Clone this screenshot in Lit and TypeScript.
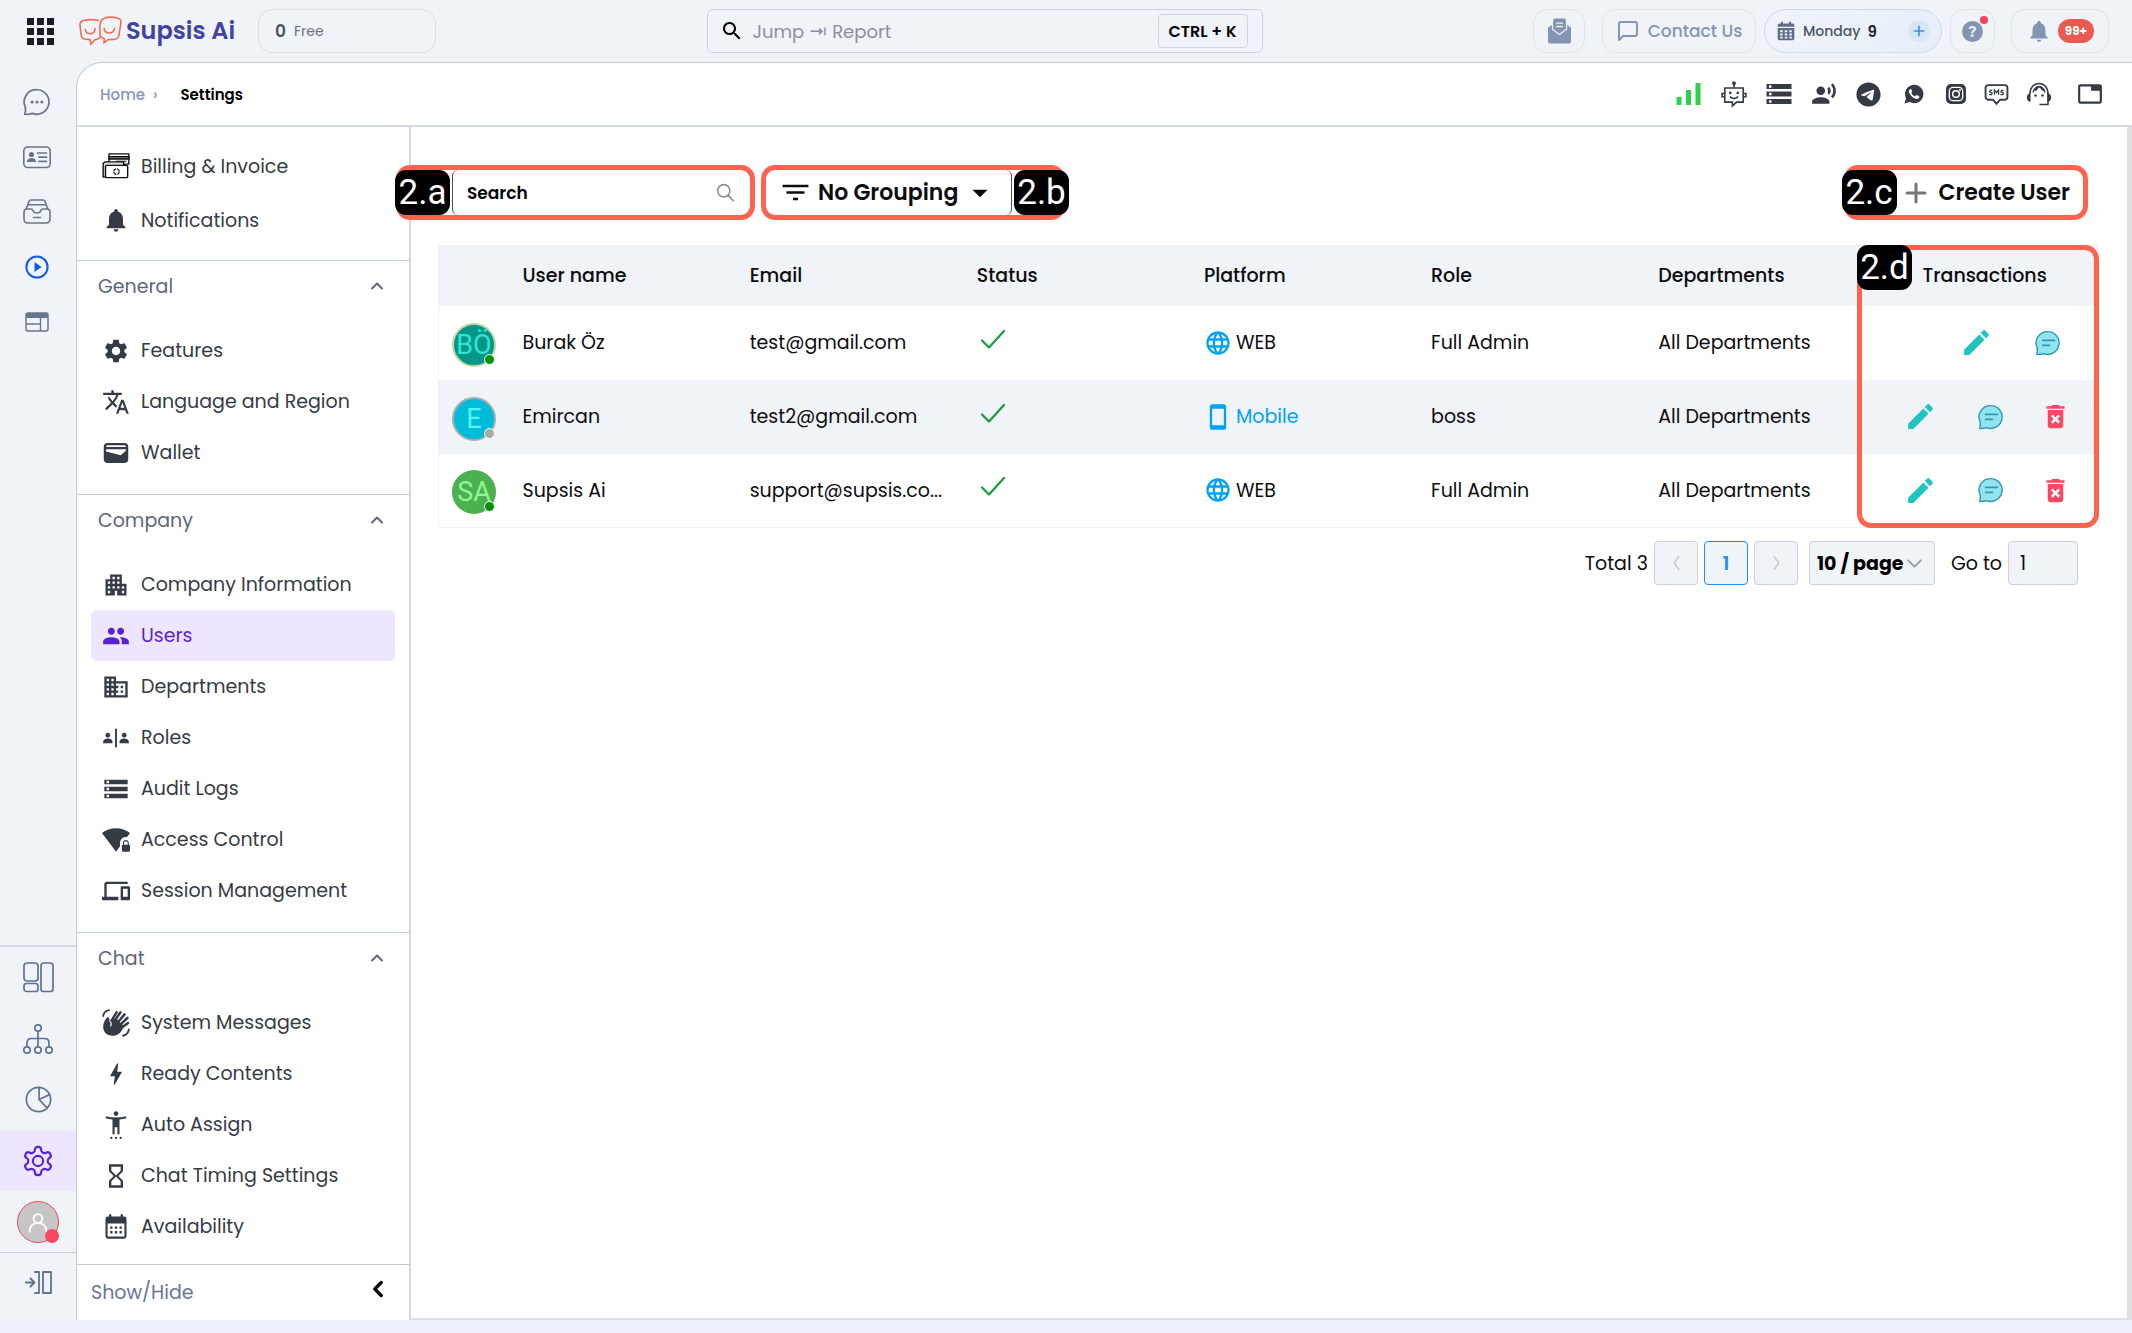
import { LitElement, html, css, svg, nothing } from "lit";
import { customElement } from "lit/decorators.js";
import { classMap } from "lit/directives/class-map.js";

type Glyph = ReturnType<typeof svg>;

const icon = (body: Glyph, w = 24, h = w, box = "0 0 24 24") => html`
  <svg class="icon" width=${w} height=${h} viewBox=${box} aria-hidden="true">${body}</svg>`;

const solid = (d: string) => svg`<path d=${d} fill="currentColor" fill-rule="evenodd"/>`;
const line = (d: string, w = 1.5) => svg`<path d=${d} fill="none" stroke="currentColor" stroke-width=${w} stroke-linecap="round" stroke-linejoin="round"/>`;

/* ---------- glyphs ---------- */
const g = {
  bell: solid("M12 22c1.1 0 2-.9 2-2h-4c0 1.1.89 2 2 2zm6-6v-5c0-3.07-1.64-5.64-4.5-6.32V4c0-.83-.67-1.5-1.5-1.5s-1.5.67-1.5 1.5v.68C7.63 5.36 6 7.92 6 11v5l-2 2v1h16v-1l-2-2z"),
  cog: solid("M19.14 12.94c.04-.3.06-.61.06-.94 0-.32-.02-.64-.07-.94l2.03-1.58c.18-.14.23-.41.12-.61l-1.92-3.32c-.12-.22-.37-.29-.59-.22l-2.39.96c-.5-.38-1.03-.7-1.62-.94l-.36-2.54c-.04-.24-.24-.41-.48-.41h-3.84c-.24 0-.43.17-.47.41l-.36 2.54c-.59.24-1.13.57-1.62.94l-2.39-.96c-.22-.08-.47 0-.59.22L2.74 8.87c-.12.21-.08.47.12.61l2.03 1.58c-.05.3-.09.63-.09.94s.02.64.07.94l-2.03 1.58c-.18.14-.23.41-.12.61l1.92 3.32c.12.22.37.29.59.22l2.39-.96c.5.38 1.03.7 1.62.94l.36 2.54c.05.24.24.41.48.41h3.84c.24 0 .44-.17.47-.41l.36-2.54c.59-.24 1.13-.56 1.62-.94l2.39.96c.22.08.47 0 .59-.22l1.92-3.32c.12-.22.07-.47-.12-.61l-2.01-1.58zM12 15.6c-1.98 0-3.6-1.62-3.6-3.6s1.62-3.6 3.6-3.6 3.6 1.62 3.6 3.6-1.62 3.6-3.6 3.6z"),
  translate: solid("M12.87 15.07l-2.54-2.51.03-.03c1.74-1.94 2.98-4.17 3.71-6.53H17V4h-7V2H8v2H1v1.99h11.17C11.5 7.92 10.44 9.75 9 11.35 8.07 10.32 7.3 9.19 6.69 8h-2c.73 1.63 1.73 3.17 2.98 4.56l-5.09 5.02L4 19l5-5 3.11 3.11.76-2.04zM18.5 10h-2L12 22h2l1.12-3h4.75L21 22h2l-4.5-12zm-2.62 7l1.62-4.33L19.12 17h-3.24z"),
  people: solid("M16 11c1.66 0 2.99-1.34 2.99-3S17.66 5 16 5c-1.66 0-3 1.34-3 3s1.34 3 3 3zm-8 0c1.66 0 2.99-1.34 2.99-3S9.66 5 8 5C6.34 5 5 6.34 5 8s1.34 3 3 3zm0 2c-2.33 0-7 1.17-7 3.5V19h14v-2.5c0-2.33-4.67-3.5-7-3.5zm8 0c-.29 0-.62.02-.97.05 1.16.84 1.97 1.97 1.97 3.45V19h6v-2.5c0-2.33-4.67-3.5-7-3.5z"),
  storage: solid("M2 20h20v-4H2v4zm2-3h2v2H4v-2zM2 4v4h20V4H2zm4 3H4V5h2v2zm-4 7h20v-4H2v4zm2-3h2v2H4v-2z"),
  bolt: solid("M11 21h-1l1-7H7.5c-.58 0-.57-.32-.38-.66.19-.34.05-.08.07-.12C8.48 10.94 10.42 7.54 13 3h1l-1 7h3.5c.49 0 .56.33.47.51l-.07.15C12.96 17.55 11 21 11 21z"),
  domain: solid("M12 7V3H2v18h20V7H12zM6 19H4v-2h2v2zm0-4H4v-2h2v2zm0-4H4V9h2v2zm0-4H4V5h2v2zm4 12H8v-2h2v2zm0-4H8v-2h2v2zm0-4H8V9h2v2zm0-4H8V5h2v2zm10 12h-8v-2h2v-2h-2v-2h2v-2h-2V9h8v10zm-2-8h-2v2h2v-2zm0 4h-2v2h2v-2z"),
  apartment: solid("M17 11V3H7v4H3v14h8v-4h2v4h8V11h-4zM7 19H5v-2h2v2zm0-4H5v-2h2v2zm0-4H5V9h2v2zm4 4H9v-2h2v2zm0-4H9V9h2v2zm0-4H9V5h2v2zm4 8h-2v-2h2v2zm0-4h-2V9h2v2zm0-4h-2V5h2v2zm4 12h-2v-2h2v2zm0-4h-2v-2h2v2z"),
  wifiLock: solid("M20.5 9.5c.28 0 .55.04.81.08L24 6c-3.34-2.51-7.5-4-12-4S3.34 3.49 0 6l12 16 3.5-4.67V14.5c0-2.76 2.24-5 5-5zM23 16v-1.5c0-1.38-1.12-2.5-2.5-2.5S18 13.12 18 14.5V16c-.55 0-1 .45-1 1v4c0 .55.45 1 1 1h5c.55 0 1-.45 1-1v-4c0-.55-.45-1-1-1zm-1 0h-3v-1.5c0-.83.67-1.5 1.5-1.5s1.5.67 1.5 1.5V16z"),
  devices: solid("M4 6h18V4H4c-1.1 0-2 .9-2 2v11H0v3h14v-3H4V6zm19 2h-6c-.55 0-1 .45-1 1v10c0 .55.45 1 1 1h6c.55 0 1-.45 1-1V9c0-.55-.45-1-1-1zm-1 9h-4v-7h4v7z"),
  hourglass: solid("M6 2v6h.01L6 8.01 10 12l-4 4 .01.01H6V22h12v-5.99h-.01L18 16l-4-4 4-3.99-.01-.01H18V2H6zm10 14.5V20H8v-3.5l4-4 4 4zm-4-5l-4-4V4h8v3.5l-4 4z"),
  search: solid("M15.5 14h-.79l-.28-.27C15.41 12.59 16 11.11 16 9.5 16 5.91 13.09 3 9.5 3S3 5.91 3 9.5 5.91 16 9.5 16c1.61 0 3.09-.59 4.23-1.57l.27.28v.79l5 4.99L20.49 19l-4.99-5zm-6 0C7.01 14 5 11.99 5 9.5S7.01 5 9.5 5 14 7.01 14 9.5 11.99 14 9.5 14z"),
  pencil: solid("M3 17.25V21h3.75L17.81 9.94l-3.75-3.75L3 17.25zM20.71 7.04c.39-.39.39-1.02 0-1.41l-2.34-2.34c-.39-.39-1.02-.39-1.41 0l-1.83 1.83 3.75 3.75 1.83-1.83z"),
  globe: solid("M11.99 2C6.47 2 2 6.48 2 12s4.47 10 9.99 10C17.52 22 22 17.52 22 12S17.52 2 11.99 2zm6.93 6h-2.95c-.32-1.25-.78-2.45-1.38-3.56 1.84.63 3.37 1.91 4.33 3.56zM12 4.04c.83 1.2 1.48 2.53 1.91 3.96h-3.82c.43-1.43 1.08-2.76 1.91-3.96zM4.26 14C4.1 13.36 4 12.69 4 12s.1-1.36.26-2h3.38c-.08.66-.14 1.32-.14 2 0 .68.06 1.34.14 2H4.26zm.82 2h2.95c.32 1.25.78 2.45 1.38 3.56-1.84-.63-3.37-1.9-4.33-3.56zm2.95-8H5.08c.96-1.66 2.49-2.93 4.33-3.56C8.81 5.55 8.35 6.75 8.03 8zM12 19.96c-.83-1.2-1.48-2.53-1.91-3.96h3.82c-.43 1.43-1.08 2.76-1.91 3.96zM14.34 14H9.66c-.09-.66-.16-1.32-.16-2 0-.68.07-1.35.16-2h4.68c.09.65.16 1.32.16 2 0 .68-.07 1.34-.16 2zm.25 5.56c.6-1.11 1.06-2.31 1.38-3.56h2.95c-.96 1.65-2.49 2.93-4.33 3.56zM16.36 14c.08-.66.14-1.32.14-2 0-.68-.06-1.34-.14-2h3.38c.16.64.26 1.31.26 2s-.1 1.36-.26 2h-3.38z"),
  phone: solid("M17 1.01L7 1c-1.1 0-1.99.9-1.99 2v18c0 1.1.89 2 1.99 2h10c1.1 0 2-.9 2-2V3c0-1.1-.9-1.99-2-1.99zM17 19H7V5h10v14z"),
  trash: solid("M6 19c0 1.1.9 2 2 2h8c1.1 0 2-.9 2-2V7H6v12zm2.46-7.12l1.41-1.41L12 12.59l2.12-2.12 1.41 1.41L13.41 14l2.12 2.12-1.41 1.41L12 15.41l-2.12 2.12-1.41-1.41L10.59 14l-2.13-2.12zM15.5 4l-1-1h-5l-1 1H5v2h14V4z"),
  telegram: solid("M12 2C6.48 2 2 6.48 2 12s4.48 10 10 10 10-4.48 10-10S17.52 2 12 2zm4.64 6.8c-.15 1.58-.8 5.42-1.13 7.19-.14.75-.42 1-.68 1.03-.58.05-1.02-.38-1.58-.75-.88-.58-1.38-.94-2.23-1.5-.99-.65-.35-1.01.22-1.59.15-.15 2.71-2.48 2.76-2.69a.2.2 0 00-.05-.18c-.06-.05-.14-.03-.21-.02-.09.02-1.49.95-4.22 2.79-.4.27-.76.41-1.08.4-.36-.01-1.04-.2-1.55-.37-.63-.2-1.12-.31-1.08-.66.02-.18.27-.36.74-.55 2.92-1.27 4.86-2.11 5.83-2.51 2.78-1.16 3.35-1.36 3.73-1.36.08 0 .27.02.39.12.1.08.13.19.14.27-.01.06.01.24 0 .38z"),
  voice: solid("M9 5a4 4 0 1 0 0 8a4 4 0 1 0 0-8zM9 15c-2.67 0-8 1.34-8 4v2h16v-2c0-2.66-5.33-4-8-4zm7.76-9.64l-1.68 1.69c.84 1.18.84 2.71 0 3.89l1.68 1.69c2.02-2.02 2.02-5.07 0-7.27zM20.07 2l-1.63 1.63c2.77 3.02 2.77 7.56 0 10.74L20.07 16c3.9-3.89 3.91-9.95 0-14z"),
  tab: solid("M21 3H3c-1.1 0-2 .9-2 2v14c0 1.1.9 2 2 2h18c1.1 0 2-.9 2-2V5c0-1.1-.9-2-2-2zm0 16H3V5h10v4h8v10z"),
  filter: solid("M10 18h4v-2h-4v2zM2 6v2h20V6H2zm3 7h14v-2H5v2z"),
  money: svg`<g fill="#fff" stroke="#111" stroke-width="1.2" stroke-linejoin="round"><path d="M6 1.6h17v8.8h-17z"/><path d="M6 4h17v2H6z" fill="#888"/><path d="M12 8h9" stroke="#555"/><path d="M1 9.5l2-1h15.5v11l-17.5 2z" fill="#ddd"/><rect x="3" y="11.5" width="19" height="10.5" rx="1"/></g><circle cx="12.4" cy="16.8" r="2.4" fill="none" stroke="#111" stroke-width="1" stroke-dasharray="3 .8"/>`,
  wallet: svg`<rect x="1.5" y="3.5" width="21" height="17" rx="3.4" fill="currentColor"/><path d="M3.5 6.900c0-.9.6-1.500 1.500-1.500h14c.9 0 1.500.6 1.500 1.500z" fill="#fff"/><path d="M3.500 8.800h17v1.200L16 14l-12.500-3.200z" fill="#fff"/>`,
  roles: svg`<g fill="currentColor"><rect x="11.2" y="4" width="1.6" height="16"/><circle cx="5" cy="9.6" r="2"/><path d="M1 15.2c0-2 2.4-2.8 4-2.8s4 .8 4 2.8v1.2H1z"/><circle cx="19" cy="9.6" r="2"/><path d="M15 15.2c0-2 2.400-2.800 4-2.800s4 .8 4 2.800v1.200h-8z"/></g>`,
  hand: svg`<g fill="none" stroke="currentColor" stroke-linecap="round"><path d="M7 12 12.500 2.800M9 13 15.800 2.800M11 14.500 19.300 4.600M12.500 16.500 21.800 7.600M13.500 18.500 22.300 12" stroke-width="2.100"/><path d="M1 6C1.500 3.400 3.400 1.400 6 1M23 17.500c-.3 2.800-2 4.800-5 5.400" stroke-width="1.600"/></g><path d="M4.200 7.200c1.300-.4 2.300.8 2.300 2.600L12 8l6.500 6.500c-1 5-5 8.500-9.500 8.500-5 0-8-3.500-8-7.500 0-3.500 1.400-6 3.200-8.300z" fill="currentColor"/><path d="M6.300 10c1.900 1.500 1.800 3.500 1 5" stroke="#fff" stroke-width="1" fill="none"/>`,
  access: svg`<g fill="currentColor"><circle cx="12" cy="2.200" r="2"/><path d="M20.500 4.500C18 5.200 15 5.500 12 5.500s-6-.3-8.500-1l-.5 1.800c1.900.5 4 .8 6 1V20h1.800v-6h2.400v6H15V7.300c2-.2 4.100-.5 6-1z"/><circle cx="8" cy="23" r="1"/><circle cx="12" cy="23" r="1"/><circle cx="16" cy="23" r="1"/></g>`,
  calendar: svg`<path d="M6 1h2v2h8V1h2v2h1a2 2 0 0 1 2 2v15a2 2 0 0 1-2 2H5a2 2 0 0 1-2-2V5a2 2 0 0 1 2-2h1zM4.800 9v11.200h14.400V9z" fill="currentColor" fill-rule="evenodd"/><g fill="currentColor"><path d="M7 11.500h2v2H7zM11 11.500h2v2h-2zM15 11.500h2v2h-2zM7 15.500h2v2H7zM11 15.500h2v2h-2zM15 15.500h2v2h-2z"/></g>`,
  calendarSolid: svg`<path d="M6 1h2.500v2h7V1H18v2h2a2 2 0 0 1 2 2v2H2V5a2 2 0 0 1 2-2h2zM2 8.500h20V21a2 2 0 0 1-2 2H4a2 2 0 0 1-2-2z" fill="currentColor"/><path d="M5 11h3v2.500H5zM10.500 11h3v2.500h-3zM16 11h3v2.500h-3zM5 15h3v2.500H5zM10.500 15h3v2.500h-3zM16 15h3v2.500h-3zM5 19h3v2H5zM10.500 19h3v2h-3zM16 19h3v2h-3z" fill="#f0f3f7"/>`,
  grid: svg`<path d="M0 0h7v7H0zM10 0h7v7h-7zM20 0h7v7h-7zM0 10h7v7H0zM10 10h7v7h-7zM20 10h7v7h-7zM0 20h7v7H0zM10 20h7v7h-7zM20 20h7v7h-7z" fill="#1d1b24"/>`,
  mail: svg`<path d="M0 9.500 4 6.500v5L12 17.500 20 11.500v-5l4 3V24a2 2 0 0 1-2 2H2a2 2 0 0 1-2-2z" fill="currentColor"/><path d="M5.300 2a2 2 0 0 1 2-2h9.400a2 2 0 0 1 2 2v9L12 15.800l-6.700-4.800zM8.500 4v1.500h7V4zm0 3.600v1.500h7V7.600z" fill="currentColor" fill-rule="evenodd"/>`,
  message: line("M21 15a2 2 0 0 1-2 2H7l-4 4V5a2 2 0 0 1 2-2h14a2 2 0 0 1 2 2z", 2),
  bubble: svg`<path d="M12 1.500A10.500 10.500 0 1 1 8 21.800Q5 22.800 1.500 22.500 2.600 19.500 2 16.500A10.500 10.500 0 0 1 12 1.500z" fill="none" stroke="currentColor" stroke-width="1.500" stroke-linejoin="round"/><circle cx="7.800" cy="12" r="1.300" fill="currentColor"/><circle cx="12" cy="12" r="1.300" fill="currentColor"/><circle cx="16.200" cy="12" r="1.300" fill="currentColor"/>`,
  chatNote: svg`<path d="M12 1.500A10.500 10.500 0 1 1 8 21.800Q5 22.800 1.500 22.500 2.600 19.500 2 16.500A10.500 10.500 0 0 1 12 1.500z" fill="#92e3f0" stroke="#3097ad" stroke-width="1.300" stroke-linejoin="round"/><path d="M6.500 9.500h12M6.500 14.200h7.500" stroke="#3097ad" stroke-width="1.600"/>`,
  idCard: svg`<rect x=".8" y="2" width="26.400" height="20.500" rx="4" fill="none" stroke="currentColor" stroke-width="1.600"/><circle cx="8.500" cy="9.500" r="2.600" fill="currentColor"/><path d="M4 17c0-3 2-4 4.500-4s4.500 1 4.500 4z" fill="currentColor"/><path d="M14.500 8h9M16 12.200h7.500M16 16.400h7.500" stroke="currentColor" stroke-width="1.700" stroke-linecap="round"/>`,
  archive: line("M4.500 6.500 6 2.200Q6.500 1 8 1h12q1.500 0 2 1.200l1.500 4.300M3 10l1.200-3q.4-1.200 2-1.200h15.600q1.600 0 2 1.200L25 10M1 13q0-3 3-3h4q1.500 0 2 1.500.8 2.500 4 2.500t4-2.500q.5-1.500 2-1.500h4q3 0 3 3v7q0 4-4 4H5q-4 0-4-4zM10.500 18.500h7", 1.6),
  play: svg`<circle cx="12" cy="12" r="10.600" fill="none" stroke="#1358e8" stroke-width="2"/><path d="M9.500 7v10l7-5z" fill="#1358e8"/>`,
  layout: svg`<rect x="1" y="3" width="22" height="18" rx="2" fill="none" stroke="currentColor" stroke-width="1.500"/><path d="M1 4q0-1 1.500-1h19Q23 3 23 4v4H1z" fill="currentColor"/><path d="M15.500 8v13M1 14h14.500" stroke="currentColor" stroke-width="1.400"/>`,
  dashboard: svg`<g fill="none" stroke="currentColor" stroke-width="1.700"><rect x="1" y="1" width="14" height="18" rx="3"/><rect x="1" y="21.500" width="14" height="8" rx="2.500"/><rect x="18" y="1" width="12" height="28.500" rx="2.500"/></g>`,
  tree: svg`<g fill="none" stroke="currentColor" stroke-width="1.700"><circle cx="15" cy="4" r="3.200"/><circle cx="4" cy="26" r="3.200"/><circle cx="15" cy="26" r="3.200"/><circle cx="26" cy="26" r="3.200"/><path d="M15 7.200v15.600M4 22.800V19q0-4.500 4.500-4.500h13Q26 14.500 26 19v3.800"/></g>`,
  pie: line("M12 1.200a10.800 10.800 0 1 0 0 21.600a10.800 10.800 0 1 0 0-21.600zM12.500 1.200V12l7 7.500M12.500 12l9.500-4.500", 1.5),
  gear: svg`<path d="M12.220 2h-.44a2 2 0 0 0-2 2v.18a2 2 0 0 1-1 1.730l-.43.25a2 2 0 0 1-2 0l-.15-.08a2 2 0 0 0-2.730.73l-.22.38a2 2 0 0 0 .73 2.730l.15.1a2 2 0 0 1 1 1.720v.51a2 2 0 0 1-1 1.740l-.15.09a2 2 0 0 0-.73 2.730l.22.38a2 2 0 0 0 2.730.73l.15-.08a2 2 0 0 1 2 0l.43.25a2 2 0 0 1 1 1.730V20a2 2 0 0 0 2 2h.44a2 2 0 0 0 2-2v-.18a2 2 0 0 1 1-1.730l.43-.25a2 2 0 0 1 2 0l.15.08a2 2 0 0 0 2.730-.73l.22-.39a2 2 0 0 0-.73-2.730l-.15-.08a2 2 0 0 1-1-1.740v-.5a2 2 0 0 1 1-1.740l.15-.09a2 2 0 0 0 .73-2.730l-.22-.38a2 2 0 0 0-2.730-.73l-.15.08a2 2 0 0 1-2 0l-.43-.25a2 2 0 0 1-1-1.730V4a2 2 0 0 0-2-2z" fill="none" stroke="currentColor" stroke-width="1.500"/><circle cx="12" cy="12" r="3.600" fill="none" stroke="currentColor" stroke-width="1.500"/>`,
  person: line("M12 2.500a5.300 5.300 0 1 0 0 10.600a5.300 5.300 0 1 0 0-10.600zM2 23.500c0-6.500 4-10.400 10-10.400s10 3.900 10 10.400", 2.2),
  expand: line("M.8 11.500h8M5.500 7.500l4 4-4 4M10 1h4v21h-4M18 1h8v21h-8z", 1.8),
  bars: svg`<path d="M0 14h5v8H0zM9.500 7h5v15h-5zM19 0h5v22h-5z" fill="#2dd14e"/>`,
  bot: svg`<g fill="none" stroke="currentColor" stroke-width="1.500"><path d="M3.500 6.500h17v13h-6L10.500 23v-3.500h-7z"/><path d="M12 6V2.500M3 11.500H1v3h2M21 11.500h2v3h-2M8.200 14.500q3.800 3.500 7.600 0"/></g><circle cx="12" cy="2" r="1.700" fill="currentColor"/><circle cx="8.500" cy="11" r="1.200" fill="currentColor"/><circle cx="15.500" cy="11" r="1.200" fill="currentColor"/>`,
  whatsapp: svg`<path d="M12.500 1A11 11 0 1 1 7 21.600L.5 23.500 2.400 17A11 11 0 0 1 12.500 1z" fill="currentColor"/><path d="M17.500 14.400c-.3-.2-1.800-1-2.100-1.100-.3-.1-.6-.1-.8.200l-1 1.200c-.200.2-.4.2-.7.1-1.700-.8-3-2-4-3.800-.1-.3 0-.5.200-.7l.7-.9c.1-.2.1-.4 0-.6l-1-2.300c-.2-.6-.5-.5-.7-.5-1.300 0-2.300 1.200-2.300 2.800 0 2.200 1.900 4.600 4 6.600 2.400 2 4.700 2.900 6.400 2.500 1.400-.3 2.200-1.500 2.200-2.600 0-.5-.5-.7-.9-.9z" fill="#fff"/>`,
  insta: svg`<rect x="0" y="0" width="24" height="24" rx="6" fill="currentColor"/><rect x="4" y="4" width="16" height="16" rx="4.500" fill="none" stroke="#fff" stroke-width="1.600"/><circle cx="12" cy="12" r="4" fill="none" stroke="#fff" stroke-width="1.800"/><circle cx="16.800" cy="7.300" r="1.200" fill="#fff"/>`,
  sms: svg`<path d="M4 3h16a2.500 2.500 0 0 1 2.500 2.500v9A2.500 2.500 0 0 1 20 17h-4.500L12 21l-3.500-4H4a2.500 2.500 0 0 1-2.500-2.500v-9A2.500 2.500 0 0 1 4 3z" fill="none" stroke="currentColor" stroke-width="1.800"/><path d="M8 8H6L5.500 9.500 7.800 10.500 7.300 12.200H5M10 12.300V7.800l2 2.500 2-2.500v4.500M18.800 8h-2l-.5 1.500 2.300 1-.5 1.700h-2.300" fill="none" stroke="currentColor" stroke-width="1.200"/>`,
  headset: svg`<path d="M3 12C3 5.500 7 1.500 12 1.500S21 5.500 21 12v10.500h-8.500" fill="none" stroke="currentColor" stroke-width="1.500"/><path d="M6 10.500Q7.500 5 12 4.500q4.500.5 6 6" fill="none" stroke="currentColor" stroke-width="1.300"/><path d="M8 9q2.500-1 3.500-4h1.500q1 3 4.500 4-1.500-4.500-5.500-4.500T8 9z" fill="currentColor" stroke="currentColor" stroke-width=".8"/><path d="M3 11.500v8Q.3 18.800.3 15.500T3 11.500zM21 11.500v8q2.700-.7 2.700-4t-2.700-4z" fill="currentColor" stroke="currentColor"/><circle cx="8.500" cy="13.500" r="1.200" fill="currentColor"/><circle cx="15.500" cy="13.500" r="1.200" fill="currentColor"/>`,
  logo: svg`<g fill="none" stroke="#f56a55" stroke-width="1.600" stroke-linejoin="round" stroke-linecap="round"><path d="M19.500 4.500Q11 2.800 4.500 4.600.6 5.500 1 9.500L2.200 19q.6 3.800 4.300 4.200l4.600.4.8 5L15.800 23.800q3.600 0 5-2.600"/><path d="M25.500 2.200Q31 .2 38.500 2q3.800.9 3.400 4.800L40 19q-.6 4-4.800 4.400l-6.600.4-3.700 3.200.4-4.200q-3.800-.8-4.300-4.500Q20.400 11 21.600 6q.9-3 3.900-3.800z"/><path d="M6.500 13.500q.5 4.600 5.200 4.200Q16 17.300 16 12.500M25 12.500q.8 4.500 5.200 4.500t5.300-4.700"/></g>`,
};

interface NavItem { label: string; glyph: Glyph; active?: boolean; }
interface NavSection { title: string; items: NavItem[]; }

const TOP_ITEMS: NavItem[] = [
  { label: "Billing & Invoice", glyph: g.money },
  { label: "Notifications", glyph: g.bell },
];

const SECTIONS: NavSection[] = [
  { title: "General", items: [
    { label: "Features", glyph: g.cog },
    { label: "Language and Region", glyph: g.translate },
    { label: "Wallet", glyph: g.wallet },
  ] },
  { title: "Company", items: [
    { label: "Company Information", glyph: g.apartment },
    { label: "Users", glyph: g.people, active: true },
    { label: "Departments", glyph: g.domain },
    { label: "Roles", glyph: g.roles },
    { label: "Audit Logs", glyph: g.storage },
    { label: "Access Control", glyph: g.wifiLock },
    { label: "Session Management", glyph: g.devices },
  ] },
  { title: "Chat", items: [
    { label: "System Messages", glyph: g.hand },
    { label: "Ready Contents", glyph: g.bolt },
    { label: "Auto Assign", glyph: g.access },
    { label: "Chat Timing Settings", glyph: g.hourglass },
    { label: "Availability", glyph: g.calendar },
  ] },
];

interface User {
  initials: string; tone: string; name: string; email: string;
  platform: "WEB" | "Mobile"; role: string; departments: string; removable: boolean;
}

const USERS: User[] = [
  { initials: "BÖ", tone: "teal", name: "Burak Öz", email: "test@gmail.com", platform: "WEB", role: "Full Admin", departments: "All Departments", removable: false },
  { initials: "E", tone: "cyan", name: "Emircan", email: "test2@gmail.com", platform: "Mobile", role: "boss", departments: "All Departments", removable: true },
  { initials: "SA", tone: "green", name: "Supsis Ai", email: "support@supsis.co...", platform: "WEB", role: "Full Admin", departments: "All Departments", removable: true },
];

const shared = css`
  :host, *, *::before, *::after { box-sizing: border-box; }
  .icon { display: block; flex: none; overflow: visible; }
  a { color: inherit; text-decoration: none; }
  button, input, select { font: inherit; color: inherit; margin: 0; padding: 0; border: 0; background: none; border-radius: 0; appearance: none; outline: 0; }
`;

@customElement("top-bar")
export class TopBar extends LitElement {
  static styles = [shared, css`
    :host { display: block; }
    .bar { display: flex; align-items: center; justify-content: space-between; height: 62px; padding: 0 23px 0 27px; }
    .left { display: flex; align-items: center; }
    .brand { display: flex; align-items: center; gap: 4px; width: 179px; margin-left: 25px; font-size: 24px; font-weight: 600; line-height: 28px; color: #4143a3; white-space: nowrap; }
    .pill { display: flex; align-items: center; height: 44px; border: 1px solid #dfe4ea; border-radius: 14px; }
    .credits { width: 178px; gap: 8px; padding: 0 16px; font-size: 14px; color: #6b7283; border-color: #dcdfe3; }
    .credits b { font-size: 17px; font-weight: 600; color: #4d5361; }
    .jump { display: flex; align-items: center; gap: 9px; width: 556px; height: 44px; padding: 0 14px 0 12px; border: 1px solid #c9d2dc; border-radius: 6px; color: #000; }
    .jump input { flex: 1; min-width: 0; height: 40px; font-size: 18px; color: #8a90a0; }
    .jump input::placeholder { color: #8a90a0; opacity: 1; }
    kbd { display: flex; align-items: center; justify-content: center; width: 90px; height: 34px; border: 1px solid #cdd6df; border-radius: 4px; font: 600 16px Poppins, Inter, sans-serif; }
    .right { display: flex; align-items: center; justify-content: flex-end; color: #8495b3; }
    .mail { width: 52px; justify-content: center; margin-right: 17px; }
    .contact { width: 154px; justify-content: center; gap: 8px; margin-right: 8px; font-size: 17px; font-weight: 500; }
    .date { width: 178px; gap: 7px; padding: 0 11px; margin-right: 8px; border-radius: 22px; border-color: #cbdaea; background: linear-gradient(120deg, #f0f4f9, #e6eef8); font-size: 14px; font-weight: 500; color: #4d5566; }
    .date .icon { color: #5f6d8b; }
    .date b { font-size: 15px; font-weight: 600; color: #1d2433; }
    .add { width: 22px; height: 22px; margin-left: auto; border-radius: 50%; background: #d9e6f6; display: flex; align-items: center; justify-content: center; }
    .add .icon { color: #3e8ae6; }
    .help { position: relative; width: 45px; justify-content: center; margin-right: 16px; }
    .dot { position: absolute; top: 6px; right: 6px; width: 8px; height: 8px; border-radius: 50%; background: #fb3f5a; }
    .bell { width: 98px; justify-content: center; gap: 6px; }
    .count { display: flex; align-items: center; height: 24px; padding: 0 7px; border-radius: 12px; background: #ea5a50; color: #fff; font-size: 12px; font-weight: 700; }
    .q { fill: #f0f3f7; font: 700 17px Inter, sans-serif; }
  `];

  render() {
    return html`
      <header class="bar">
        <div class="left">
          <button aria-label="Apps">${icon(g.grid, 27, 27, "0 0 27 27")}</button>
          <a class="brand" href="#home">${icon(g.logo, 43, 30, "0 0 43 30")}<span>Supsis Ai</span></a>
          <div class="pill credits"><b>0</b><span>Free</span></div>
        </div>
        <label class="jump">
          ${icon(g.search, 24)}
          <input type="text" aria-label="Jump to" placeholder="Jump ⇥ Report">
          <kbd>CTRL + K</kbd>
        </label>
        <div class="right">
          <button class="pill mail" aria-label="Mail">${icon(g.mail, 23, 26, "0 0 24 26")}</button>
          <button class="pill contact">${icon(g.message, 24)}<span>Contact Us</span></button>
          <div class="pill date">
            ${icon(g.calendarSolid, 20)}<span>Monday</span><b>9</b>
            <button class="add" aria-label="Add event">${icon(line("M12 5v14M5 12h14", 2.4), 16)}</button>
          </div>
          <button class="pill help" aria-label="Help">
            ${icon(svg`<circle cx="12" cy="12" r="12" fill="currentColor"/><text class="q" x="12" y="18" text-anchor="middle">?</text>`, 21)}
            <span class="dot"></span>
          </button>
          <button class="pill bell" aria-label="Notifications">${icon(g.bell, 26)}<span class="count">99+</span></button>
        </div>
      </header>`;
  }
}

@customElement("icon-rail")
export class IconRail extends LitElement {
  static styles = [shared, css`
    :host { display: flex; flex-direction: column; justify-content: space-between; width: 76px; color: #68758a; }
    .upper { display: flex; flex-direction: column; padding-top: 12px; }
    .upper a { display: flex; align-items: center; justify-content: center; height: 55px; padding-right: 2px; }
    .lower { display: flex; flex-direction: column; border-top: 2px solid #cfd7df; color: #5f7296; }
    .lower a { display: flex; align-items: center; justify-content: center; height: 61px; }
    .lower .active { background: #eee6ff; color: #5423d8; }
    .lower .toggle { height: 68px; padding-bottom: 8px; border-top: 1px solid #c3ced8; }
    .me { position: relative; display: flex; align-items: center; justify-content: center; width: 42px; height: 42px; border: 1px solid #f5485c; border-radius: 50%; background: #c6c6c6; color: #fff; }
    .presence { position: absolute; right: -1px; bottom: -1px; width: 14px; height: 14px; border-radius: 50%; background: #fb4860; }
  `];

  render() {
    return html`
      <nav class="upper" aria-label="Workspace">
        <a href="#chats" aria-label="Chats">${icon(g.bubble, 28)}</a>
        <a href="#contacts" aria-label="Contacts">${icon(g.idCard, 28, 24, "0 0 28 24")}</a>
        <a href="#archive" aria-label="Archive">${icon(g.archive, 28, 25, "0 0 28 25")}</a>
        <a href="#play" aria-label="Live">${icon(g.play, 24)}</a>
        <a href="#pages" aria-label="Pages">${icon(g.layout, 24)}</a>
      </nav>
      <nav class="lower" aria-label="Administration">
        <a href="#dashboard" aria-label="Dashboard">${icon(g.dashboard, 31, 31, "0 0 31 31")}</a>
        <a href="#flows" aria-label="Flows">${icon(g.tree, 30, 30, "0 0 30 30")}</a>
        <a href="#reports" aria-label="Reports">${icon(g.pie, 27)}</a>
        <a class="active" href="#settings" aria-label="Settings">${icon(g.gear, 34)}</a>
        <a href="#profile" aria-label="Profile"><span class="me">${icon(g.person, 20)}<span class="presence"></span></span></a>
        <a class="toggle" href="#expand" aria-label="Expand">${icon(g.expand, 27, 23, "0 0 27 23")}</a>
      </nav>`;
  }
}

@customElement("settings-menu")
export class SettingsMenu extends LitElement {
  static styles = [shared, css`
    :host { display: flex; flex-direction: column; width: 334px; border-right: 2px solid #d5dae2; color: #353b44; font-size: 19px; }
    .list { display: flex; flex-direction: column; padding: 0 14px; }
    .first { padding: 12px 14px 13px; }
    .first .item { height: 54px; }
    .item { display: flex; align-items: center; height: 51px; padding-left: 10px; border-radius: 6px; white-space: nowrap; }
    .glyph { display: flex; justify-content: center; width: 30px; margin-right: 10px; }
    .item.active { background: #eee6ff; color: #5a1fd0; }
    .group { border-top: 1px solid #c3ced8; padding-bottom: 16px; }
    .group:last-of-type { padding-bottom: 10px; }
    .head { display: flex; align-items: center; justify-content: space-between; width: 100%; height: 50px; margin-bottom: 14px; padding: 0 20px 0 21px; color: #5d6677; }
    .foot { display: flex; align-items: center; justify-content: space-between; height: 56px; margin-top: auto; padding: 0 18px 0 14px; border-top: 1px solid #c3ced8; color: #667694; }
    .foot .icon { color: #000; margin-bottom: 8px; }
  `];

  private item(i: NavItem) {
    return html`<a class=${classMap({ item: true, active: !!i.active })} href="#${i.label}">
      <span class="glyph">${icon(i.glyph, 28)}</span><span>${i.label}</span></a>`;
  }

  render() {
    return html`
      <nav class="list first">${TOP_ITEMS.map((i) => this.item(i))}</nav>
      ${SECTIONS.map((s) => html`
        <section class="group">
          <button class="head" aria-expanded="true"><span>${s.title}</span>${icon(line("M7 14.5l5-5 5 5", 2), 24)}</button>
          <div class="list">${s.items.map((i) => this.item(i))}</div>
        </section>`)}
      <button class="foot"><span>Show/Hide</span>${icon(line("M15 6l-6 6 6 6", 3), 26)}</button>`;
  }
}

@customElement("users-view")
export class UsersView extends LitElement {
  static styles = [shared, css`
    :host { display: block; color: #0c0c0f; font-size: 19px; }
    .view { padding: 43px 28px 0 27px; }
    .tools { display: flex; align-items: center; height: 45px; margin-bottom: 30px; padding: 0 16px 0 14px; }
    .marked { position: relative; display: flex; align-items: center; height: 45px; }
    .frame { position: absolute; border: 5px solid #ff6350; border-radius: 14px; pointer-events: none; }
    .tag { position: absolute; display: flex; align-items: center; justify-content: center; width: 55px; height: 45px; border-radius: 11px; background: #000; color: #fff; font: 400 35px/45px Roboto, sans-serif; }
    .search { width: 298px; margin-right: 16px; border-left: 1px solid #4c4c55; border-radius: 6px; padding: 0 14px; color: #8f8f8f; }
    .search input { flex: 1; min-width: 0; height: 40px; font-size: 17px; font-weight: 600; color: #000; }
    .search input::placeholder { color: #000; opacity: 1; }
    .search .frame { inset: -5px -5px -5px -57px; }
    .search .tag { left: -58px; top: 0; }
    .group { width: 246px; gap: 7px; border-right: 1px solid #4c4c55; border-radius: 6px; padding-left: 14px; font-size: 22px; font-weight: 600; }
    .group select { flex: 1; min-width: 0; height: 40px; }
    .group .caret { position: absolute; right: 18px; top: 10px; pointer-events: none; }
    .group .frame { inset: -5px -54px -5px -5px; }
    .group .tag { right: -58px; top: 0; }
    .create { margin-left: auto; gap: 11px; padding-right: 13px; font-size: 22px; font-weight: 600; }
    .create .icon { color: #757575; }
    .create .frame { inset: -5px -5px -5px -60px; }
    .create .tag { left: -62px; top: 0; }
    .sheet { position: relative; }
    .sheet .frame { right: 0; top: 0; bottom: 0; width: 242px; }
    .sheet .tag { right: 187px; top: 0; }
    table { width: 100%; border-collapse: collapse; table-layout: fixed; border: 1px solid #f0f2f5; }
    .lead { width: 70px; }
    th, td { padding: 0 14px; text-align: left; font-weight: 400; white-space: nowrap; overflow: hidden; }
    th { height: 60px; font-weight: 500; background: #f0f3f7; }
    td { height: 74px; }
    .striped td { background: #f0f3f7; }
    th.mid { text-align: center; }
    .tight { padding: 4px 0 0 13px; }
    .face { position: relative; display: flex; align-items: center; justify-content: center; width: 44px; height: 44px; border-radius: 50%; border: 2px solid transparent; font: 400 27px/40px Roboto, sans-serif; }
    .teal { background: #069689; color: #2fe6d5; border-color: #b9d9a8; }
    .cyan { background: #00bcd8; color: #52f4f8; border-color: #a7aeb1; }
    .green { background: #4bb050; color: #93f58f; }
    .state { position: absolute; right: -1px; bottom: 0; width: 11px; height: 11px; border: 1px solid #fff; border-radius: 50%; background: #059405; }
    .state.away { background: #a9a9a9; }
    .ok { display: flex; color: #189c3c; padding: 0 0 7px 4px; }
    .plat { display: flex; align-items: center; gap: 4px; }
    .plat .icon { color: #00a2fa; }
    .mobile { color: #00a2fa; }
    .acts { display: flex; align-items: center; justify-content: flex-end; }
    .acts button { display: flex; justify-content: center; width: 72px; color: #20c4be; }
    .acts .del { width: 59px; color: #f94862; }
    .pager { display: flex; align-items: center; justify-content: flex-end; gap: 6px; margin-top: 13px; padding-right: 21px; }
    .box { display: flex; align-items: center; justify-content: center; width: 44px; height: 44px; border: 1px solid #cdd1d9; border-radius: 4px; background: #f0f3f7; color: #c4c7cc; }
    .box.on { border-color: #1f90ee; color: #1f90ee; font-weight: 600; }
    .size { position: relative; display: flex; align-items: center; width: 126px; margin: 0 10px 0 5px; color: #000; }
    .size select { width: 100%; height: 44px; padding-left: 7px; border: 1px solid #cdd1d9; border-radius: 3px; background: #f0f3f7; font-weight: 700; }
    .size .icon { position: absolute; right: 11px; color: #9d9da0; pointer-events: none; }
    .goto { display: flex; align-items: center; gap: 6px; }
    .goto input { width: 70px; height: 44px; padding: 0 11px; border: 1px solid #cdd1d9; border-radius: 4px; background: #f0f3f7; }
  `];

  private row(u: User, n: number) {
    const mobile = u.platform === "Mobile";
    return html`<tr class=${classMap({ striped: n % 2 === 1 })}>
      <td class="tight"><span class="face ${u.tone}">${u.initials}<span class=${classMap({ state: true, away: mobile })}></span></span></td>
      <td>${u.name}</td>
      <td>${u.email}</td>
      <td><span class="ok" role="img" aria-label="Active">${icon(line("M1 10.5l7 7L23 1", 2.2), 24, 19, "0 0 24 19")}</span></td>
      <td><span class=${classMap({ plat: true, mobile })}>${icon(mobile ? g.phone : g.globe, 28)}${u.platform}</span></td>
      <td>${u.role}</td>
      <td>${u.departments}</td>
      <td><div class="acts">
        <button aria-label="Edit ${u.name}">${icon(g.pencil, 33)}</button>
        <button aria-label="Message ${u.name}">${icon(g.chatNote, 26)}</button>
        ${u.removable ? html`<button class="del" aria-label="Delete ${u.name}">${icon(g.trash, 31)}</button>` : nothing}
      </div></td>
    </tr>`;
  }

  render() {
    return html`
      <div class="view">
        <div class="tools">
          <div class="marked search">
            <input type="text" aria-label="Search" placeholder="Search">
            ${icon(line("M10 3a7 7 0 1 0 0 14a7 7 0 1 0 0-14zM15 15l6 6.5", 1.8), 21)}
            <span class="frame"></span><span class="tag">2.a</span>
          </div>
          <div class="marked group">
            ${icon(g.filter, 31)}
            <select aria-label="Grouping"><option>No Grouping</option></select>
            <span class="caret">${icon(solid("M5 9h14l-7 7z"), 26)}</span>
            <span class="frame"></span><span class="tag">2.b</span>
          </div>
          <button class="marked create">
            ${icon(line("M12 3v18M3 12h18", 3), 24)}<span>Create User</span>
            <span class="frame"></span><span class="tag">2.c</span>
          </button>
        </div>
        <div class="sheet">
          <table>
            <thead><tr>
              <th class="lead"></th><th>User name</th><th>Email</th><th>Status</th>
              <th>Platform</th><th>Role</th><th>Departments</th><th class="mid">Transactions</th>
            </tr></thead>
            <tbody>${USERS.map((u, n) => this.row(u, n))}</tbody>
          </table>
          <span class="frame"></span><span class="tag">2.d</span>
        </div>
        <div class="pager">
          <span>Total 3</span>
          <button class="box" aria-label="Previous page">${icon(line("M15 5l-5 7 5 7", 1.6), 22)}</button>
          <button class="box on" aria-current="page">1</button>
          <button class="box" aria-label="Next page">${icon(line("M10 5l5 7-5 7", 1.6), 22)}</button>
          <div class="size">
            <select aria-label="Rows per page"><option>10 / page</option></select>
            ${icon(line("M4 8l8 8 8-8", 2.4), 19)}
          </div>
          <label class="goto">Go to <input type="text" value="1"></label>
        </div>
      </div>`;
  }
}

@customElement("app-root")
export class AppRoot extends LitElement {
  static styles = [shared, css`
    :host { display: flex; flex-direction: column; min-height: 100vh; padding-bottom: 13px; background: linear-gradient(to top, #ecf0fa 13px, #f0f3f7 13px); font-family: Poppins, Inter, sans-serif; }
    .body { flex: 1; display: flex; }
    .panel { flex: 1; min-width: 0; display: flex; flex-direction: column; border: 1px solid #c3ced8; border-width: 1px 0 0 1px; border-top-left-radius: 26px; background: #fff; }
    .crumbs { display: flex; align-items: center; justify-content: space-between; height: 64px; padding: 0 30px 0 23px; border-bottom: 2px solid #d5dae0; font-size: 15px; }
    .trail { display: flex; align-items: center; gap: 8px; font-weight: 500; color: #8794bd; }
    .trail b { margin-left: 15px; font-weight: 600; color: #000; }
    .channels { display: flex; align-items: center; color: #353b44; }
    .channels a { display: flex; justify-content: center; width: 45px; }
    .channels .narrow { width: 40px; }
    .channels .last { width: 24px; margin-left: 17px; }
    .split { flex: 1; display: flex; }
    .content { flex: 1; min-width: 0; border-right: 5px solid #dfdfdf; border-bottom: 2px solid #dcdfe4; }
  `];

  render() {
    return html`
      <top-bar></top-bar>
      <div class="body">
        <icon-rail></icon-rail>
        <div class="panel">
          <div class="crumbs">
            <nav class="trail" aria-label="Breadcrumb"><a href="#home">Home</a><span>›</span><b>Settings</b></nav>
            <nav class="channels" aria-label="Channels">
              <a href="#signal" aria-label="Signal">${icon(g.bars, 25, 22, "0 0 24 22")}</a>
              <a href="#bot" aria-label="Bot">${icon(g.bot, 26)}</a>
              <a href="#queue" aria-label="Queue">${icon(g.storage, 30)}</a>
              <a href="#voice" aria-label="Voice">${icon(g.voice, 26)}</a>
              <a href="#telegram" aria-label="Telegram">${icon(g.telegram, 29)}</a>
              <a href="#whatsapp" aria-label="WhatsApp">${icon(g.whatsapp, 20)}</a>
              <a class="narrow" href="#instagram" aria-label="Instagram">${icon(g.insta, 20)}</a>
              <a class="narrow" href="#sms" aria-label="SMS">${icon(g.sms, 25)}</a>
              <a href="#agents" aria-label="Agents">${icon(g.headset, 24)}</a>
              <a class="last" href="#tab" aria-label="New tab">${icon(g.tab, 26)}</a>
            </nav>
          </div>
          <div class="split">
            <settings-menu></settings-menu>
            <main class="content"><users-view></users-view></main>
          </div>
        </div>
      </div>`;
  }
}
